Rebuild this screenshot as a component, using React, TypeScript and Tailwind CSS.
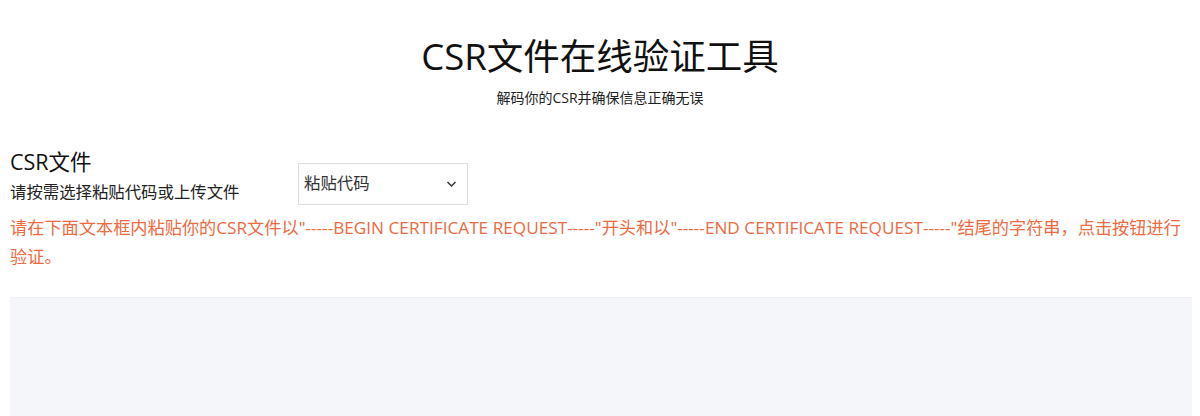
import React from "react";

export default function App() {
  const font = { fontFamily: '"Open Sans", "Noto Sans CJK SC", sans-serif' };
  return (
    <div className="w-[1200px] h-[416px] bg-white overflow-hidden text-[#222]" style={font}>
      <div className="flex flex-col items-center pt-[30px]">
        <h1 className="text-[36.5px] leading-[52px] text-[#111]">CSR文件在线验证工具</h1>
        <p className="text-[14px] leading-[20px] mt-[6px] text-[#222]">解码你的CSR并确保信息正确无误</p>
      </div>
      <div className="px-[10px] mt-[40px]">
        <div className="flex items-start">
          <div className="w-[288px]">
            <div className="text-[21.5px] leading-[28px] text-[#111]">CSR文件</div>
            <div className="text-[16.4px] leading-[24px] mt-[4px] text-[#222]">请按需选择粘贴代码或上传文件</div>
          </div>
          <div className="mt-[15px] w-[170px] h-[42px] border border-[#dcdcdc] bg-white flex items-center justify-between pl-[5px] pr-[10px]">
            <span className="text-[16.4px] leading-[20px] text-[#333] mt-[-2px]">粘贴代码</span>
            <svg width="11" height="8" viewBox="0 0 11 8" fill="none" stroke="#333" strokeWidth="1.5">
              <path d="M1.5 2 L5.5 6 L9.5 2" />
            </svg>
          </div>
        </div>
        <p className="w-[1175px] text-[17.2px] leading-[29px] text-[#ee6a3f] mt-[8px]">
          请在下面文本框内粘贴你的CSR文件以"-----BEGIN CERTIFICATE REQUEST-----"开头和以"-----END CERTIFICATE REQUEST-----"结尾的字符串，点击按钮进行验证。
        </p>
        <div className="mt-[26px] w-[1182px] h-[140px] bg-[#f5f6fa] border-t border-[#eeeff3]"></div>
      </div>
    </div>
  );
}
